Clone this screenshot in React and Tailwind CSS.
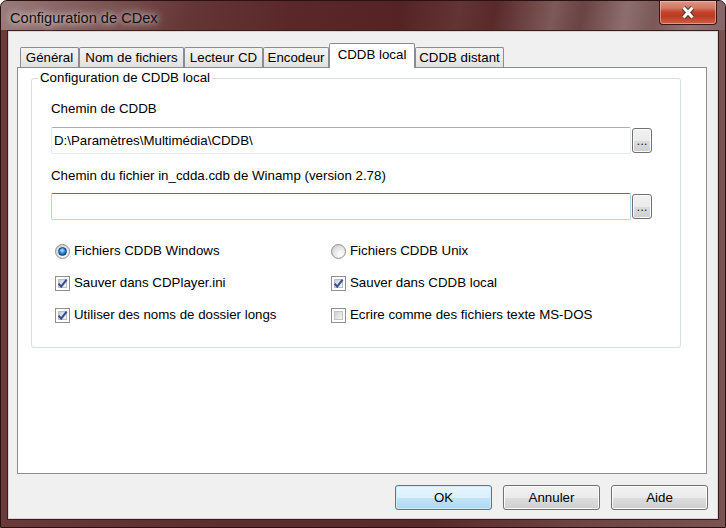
import React from "react";

function Check({ checked }) {
  return (
    <span className="relative flex-none w-[15px] h-[15px] border border-[#8e8f8f] bg-white p-[2px]">
      <span
        className={
          checked
            ? "block w-full h-full border border-[#b8bfcb] bg-[linear-gradient(135deg,#c7cedb_0%,#e6eaf1_60%,#f7f8fa_100%)]"
            : "block w-full h-full border border-[#c4c4c4] bg-[linear-gradient(135deg,#cfcfcf_0%,#e6e6e6_60%,#f6f6f6_100%)]"
        }
      />
      {checked && (
        <svg className="absolute left-0 top-0" width="13" height="13" viewBox="0 0 13 13">
          <path d="M2.6 6.6 L5.2 9.6 L10.6 2.6" stroke="#3b4f8c" strokeWidth="2.1" fill="none" strokeLinejoin="miter" />
        </svg>
      )}
    </span>
  );
}

function Radio({ checked }) {
  return (
    <span className="flex-none w-[15px] h-[15px] rounded-full border border-[#8e8f8f] bg-[radial-gradient(circle_at_65%_70%,#ffffff_0%,#e8e8e8_45%,#c6c6c6_100%)] flex items-center justify-center">
      {checked && (
        <span className="w-[9px] h-[9px] rounded-full border border-[#0c3f7a] bg-[radial-gradient(circle_at_45%_35%,#bfe6ff_0%,#3d95e0_40%,#0d58a8_75%,#083a75_100%)]" />
      )}
    </span>
  );
}

function Btn({ children, primary }) {
  return (
    <div
      className={
        primary
          ? "w-[97px] h-[25px] rounded-[3px] border border-[#3c7fb1] shadow-[inset_0_0_0_1px_#cfeafa] bg-[linear-gradient(180deg,#e8f5fc_0%,#dcf0fb_50%,#c2e4f7_51%,#aad9f3_100%)] flex items-center justify-center leading-[16px]"
          : "w-[97px] h-[25px] rounded-[3px] border border-[#707070] shadow-[inset_0_0_0_1px_#fbfbfb] bg-[linear-gradient(180deg,#f2f2f2_0%,#ebebeb_50%,#dddddd_51%,#cfcfcf_100%)] flex items-center justify-center leading-[16px]"
      }
    >
      {children}
    </div>
  );
}

function DotsBtn() {
  return (
    <div className="flex-none ml-[1px] w-[20px] h-[25px] rounded-[3px] border border-[#707070] shadow-[inset_0_0_0_1px_#fbfbfb] bg-[linear-gradient(180deg,#f2f2f2_0%,#ebebeb_50%,#dddddd_51%,#cfcfcf_100%)] flex items-center justify-center leading-[16px] text-[#1a1a5a]">
      ...
    </div>
  );
}

function Tab({ label, w, selected }) {
  if (selected) {
    return (
      <div
        className="relative z-10 -mb-[1px] h-[25px] border-l border-t border-r border-[#898c95] bg-white flex justify-center pt-[3px] leading-[16px] rounded-t-[2px]"
        style={{ width: w }}
      >
        {label}
      </div>
    );
  }
  return (
    <div
      className="h-[20px] border-l border-t border-r border-[#898c95] bg-[linear-gradient(180deg,#f3f3f3_0%,#ebebeb_50%,#e1e1e1_100%)] flex items-center justify-center leading-[16px] rounded-t-[2px]"
      style={{ width: w }}
    >
      {label}
    </div>
  );
}

export default function App() {
  return (
    <div className="w-[726px] h-[528px] font-['Liberation_Sans',Arial,sans-serif] text-[13.3px] text-black">
      <div className="w-full h-full flex flex-col border border-[#2a1212] rounded-t-[7px] overflow-hidden bg-[linear-gradient(90deg,#6a3a3a_0%,#5e2e2e_30%,#5a2a2a_60%,#6e4444_80%,#7a5252_100%)]">
        {/* Title bar */}
        <div className="relative h-[29px] flex-none bg-[linear-gradient(100deg,#9a7b7b_0%,#7d5454_14%,#653636_26%,#5a2828_40%,#552323_55%,#633434_63%,#5a2a2a_68%,#7d5959_76%,#6a4343_80%,#8d6e6e_86%,#7a5858_90%,#937575_95%,#846464_100%)]">
          <div className="pl-[9px] pt-[5px] text-[14.6px] leading-[24px] text-[#111] [text-shadow:0_0_6px_rgba(255,255,255,0.9),0_0_14px_rgba(255,255,255,0.6)]">
            Configuration de CDex
          </div>
          <div className="absolute left-[658px] top-0 w-[58px] h-[24px] rounded-b-[4px] border border-t-0 border-[#3a1414] shadow-[inset_0_0_0_1px_rgba(255,200,185,0.55)] bg-[linear-gradient(180deg,#dc9786_0%,#d27a64_30%,#c4432c_48%,#bb3a24_65%,#cf5e42_100%)] flex items-center justify-center">
            <svg width="16" height="13" viewBox="0 0 16 13">
              <path d="M3.5 1.5 L12.5 11.5 M12.5 1.5 L3.5 11.5" stroke="#5a3030" strokeWidth="5" />
              <path d="M3.5 1.5 L12.5 11.5 M12.5 1.5 L3.5 11.5" stroke="#ffffff" strokeWidth="3" />
            </svg>
          </div>
        </div>

        {/* Client */}
        <div className="mx-[6px] h-[490px] flex-none border border-[#3a1c1c] bg-[#f0f0f0] shadow-[inset_0_0_0_1px_#d9d4d4] flex flex-col">
          {/* Tabs */}
          <div className="mt-[12px] ml-[12px] h-[24px] flex items-end">
            <Tab label="Général" w={59} />
            <Tab label="Nom de fichiers" w={105} />
            <Tab label="Lecteur CD" w={79} />
            <Tab label="Encodeur" w={66} />
            <Tab label="CDDB local" w={86} selected />
            <Tab label="CDDB distant" w={89} />
          </div>

          {/* Panel */}
          <div className="ml-[9px] w-[690px] h-[407px] flex-none border border-[#898c95] bg-white">
            <div className="relative mt-[10px] ml-[13px] w-[650px] h-[270px] border border-[#d5dfe5] rounded-[3px] pl-[19px] pt-[21px]">
              <div className="absolute -top-[9px] left-[6px] px-[2px] bg-white leading-[16px]">
                Configuration de CDDB local
              </div>

              <div className="h-[18px] leading-[18px]">Chemin de CDDB</div>
              <div className="mt-[9px] flex items-center">
                <div className="w-[580px] h-[27px] rounded-[2px] border border-[#e3e9ef] border-t-[#abadb3] bg-white flex items-center pl-[2px] leading-[16px]">
                  D:\Paramètres\Multimédia\CDDB\
                </div>
                <DotsBtn />
              </div>

              <div className="mt-[13px] h-[18px] leading-[18px]">
                Chemin du fichier in_cdda.cdb de Winamp (version 2.78)
              </div>
              <div className="mt-[8px] flex items-center">
                <div className="w-[580px] h-[27px] rounded-[2px] border border-[#b5d6ec] border-t-[#3d7bad] bg-white" />
                <DotsBtn />
              </div>

              <div className="mt-[22px] ml-[4px] h-[18px] flex items-center">
                <div className="w-[276px] flex items-center gap-[4px]">
                  <Radio checked />
                  <span className="leading-[18px]">Fichiers CDDB Windows</span>
                </div>
                <div className="flex items-center gap-[4px]">
                  <Radio />
                  <span className="leading-[18px]">Fichiers CDDB Unix</span>
                </div>
              </div>

              <div className="mt-[14px] ml-[4px] h-[18px] flex items-center">
                <div className="w-[276px] flex items-center gap-[4px]">
                  <Check checked />
                  <span className="leading-[18px]">Sauver dans CDPlayer.ini</span>
                </div>
                <div className="flex items-center gap-[4px]">
                  <Check checked />
                  <span className="leading-[18px]">Sauver dans CDDB local</span>
                </div>
              </div>

              <div className="mt-[14px] ml-[4px] h-[18px] flex items-center">
                <div className="w-[276px] flex items-center gap-[4px]">
                  <Check checked />
                  <span className="leading-[18px]">Utiliser des noms de dossier longs</span>
                </div>
                <div className="flex items-center gap-[4px]">
                  <Check />
                  <span className="leading-[18px]">Ecrire comme des fichiers texte MS-DOS</span>
                </div>
              </div>
            </div>
          </div>

          {/* Buttons */}
          <div className="mt-[11px] pr-[10px] flex justify-end gap-[11px]">
            <Btn primary>OK</Btn>
            <Btn>Annuler</Btn>
            <Btn>Aide</Btn>
          </div>
        </div>
      </div>
    </div>
  );
}
